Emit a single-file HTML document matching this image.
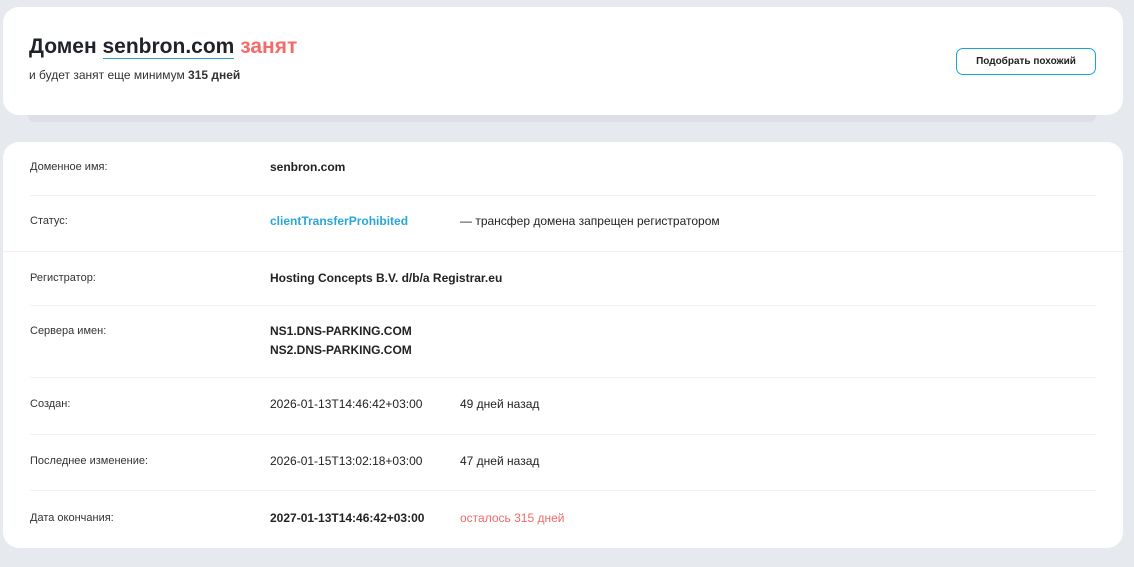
<!DOCTYPE html>
<html><head><meta charset="utf-8"><style>
*{margin:0;padding:0;box-sizing:border-box}
body{width:1134px;height:567px;background:#e6eaee;font-family:"Liberation Sans","DejaVu Sans",sans-serif;color:#222;position:relative;overflow:hidden}
.abs{position:absolute;white-space:nowrap}
.card{position:absolute;background:#fff;border-radius:16px}
.shadow{position:absolute;left:28px;top:108px;width:1068px;height:14px;background:#dce0e5;border-radius:0 0 6px 6px}
.lbl{font-size:11px;color:#333}
.val{font-size:12px;color:#222}
.b{font-weight:bold}
.sep{position:absolute;height:1px;background:#f0f1f3}
</style></head><body>
<div class="shadow"></div>
<div class="card" style="left:3px;top:7px;width:1120px;height:108px"></div>
<div class="abs b" style="left:29px;top:35px;font-size:21px;color:#1f2229">Домен <span style="border-bottom:1.5px solid #2a9fd0">senbron.com</span> <span style="color:#f56b6b">занят</span></div>
<div class="abs" style="left:29px;top:68px;font-size:12px;color:#333">и будет занят еще минимум <b>315 дней</b></div>
<div class="abs" style="left:956px;top:48px;width:140px;height:27px;border:1px solid #1aa3d9;border-radius:7px;font-size:10px;font-weight:bold;color:#222;text-align:center;line-height:25px">Подобрать похожий</div>

<div class="card" style="left:3px;top:142px;width:1120px;height:406px"></div>
<div class="sep" style="left:30px;top:195px;width:1066px"></div>
<div class="sep" style="left:3px;top:251px;width:1120px"></div>
<div class="sep" style="left:30px;top:305px;width:1066px"></div>
<div class="sep" style="left:30px;top:377px;width:1066px"></div>
<div class="sep" style="left:30px;top:434px;width:1066px"></div>
<div class="sep" style="left:30px;top:490px;width:1066px"></div>

<div class="abs lbl" style="left:30px;top:161px">Доменное имя:</div>
<div class="abs val b" style="left:270px;top:160px">senbron.com</div>

<div class="abs lbl" style="left:30px;top:215px">Статус:</div>
<div class="abs val b" style="left:270px;top:214px;color:#2aa6d8">clientTransferProhibited</div>
<div class="abs val" style="left:460px;top:214px">— трансфер домена запрещен регистратором</div>

<div class="abs lbl" style="left:30px;top:272px">Регистратор:</div>
<div class="abs val b" style="left:270px;top:271px">Hosting Concepts B.V. d/b/a Registrar.eu</div>

<div class="abs lbl" style="left:30px;top:325px">Сервера имен:</div>
<div class="abs val b" style="left:270px;top:324px">NS1.DNS-PARKING.COM</div>
<div class="abs val b" style="left:270px;top:343px">NS2.DNS-PARKING.COM</div>

<div class="abs lbl" style="left:30px;top:398px">Создан:</div>
<div class="abs val" style="left:270px;top:397px">2026-01-13T14:46:42+03:00</div>
<div class="abs val" style="left:460px;top:397px">49 дней назад</div>

<div class="abs lbl" style="left:30px;top:455px">Последнее изменение:</div>
<div class="abs val" style="left:270px;top:454px">2026-01-15T13:02:18+03:00</div>
<div class="abs val" style="left:460px;top:454px">47 дней назад</div>

<div class="abs lbl" style="left:30px;top:512px">Дата окончания:</div>
<div class="abs val b" style="left:270px;top:511px">2027-01-13T14:46:42+03:00</div>
<div class="abs val" style="left:460px;top:511px;color:#f06a6a">осталось 315 дней</div>
</body></html>
